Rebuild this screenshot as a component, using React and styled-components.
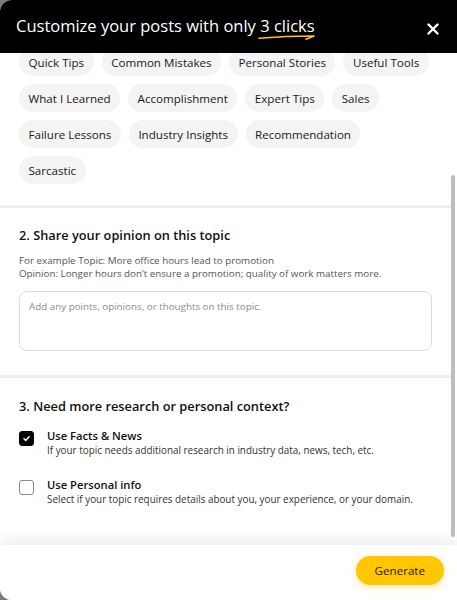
import React, { useLayoutEffect, useRef, useState } from "react";
import styled, { createGlobalStyle } from "styled-components";

const Global = createGlobalStyle`
  html, body { margin: 0; padding: 0; height: 100%; background: #7b7b7b; }
  #root { height: 100%; }
  * { box-sizing: border-box; }
`;

const FONT = `"Open Sans", "Noto Sans", sans-serif`;

const Modal = styled.div`
  width: 457px;
  height: 600px;
  background: #fff;
  border-radius: 12px 0 0 12px;
  overflow: hidden;
  display: flex;
  flex-direction: column;
  font-family: ${FONT};
  color: #111;
`;

const Header = styled.div`
  flex: 0 0 53px;
  background: #000;
  display: flex;
  align-items: center;
  justify-content: space-between;
  padding: 0 16px;
  position: relative;
  z-index: 2;
`;

const Title = styled.h1`
  margin: -2px 0 0;
  font-size: 16.5px;
  font-weight: 400;
  color: #fff;
  line-height: 22px;
  white-space: nowrap;
`;

const Highlight = styled.span`
  position: relative;
  display: inline-block;
`;

const Swoosh = styled.svg`
  position: absolute;
  left: -2px;
  top: 18px;
  width: 60px;
  height: 8px;
  overflow: visible;
`;

const CloseButton = styled.button`
  background: none;
  border: none;
  padding: 0;
  width: 16px;
  height: 16px;
  display: flex;
  align-items: center;
  justify-content: center;
  cursor: pointer;
  margin-top: 5px;
`;

const ScrollWrap = styled.div`
  flex: 1 1 auto;
  min-height: 0;
  position: relative;
`;

const Scroll = styled.div`
  height: 100%;
  overflow-y: scroll;
  padding-right: 6px;
  scrollbar-width: none;
  &::-webkit-scrollbar { display: none; }
`;

const Thumb = styled.div`
  position: absolute;
  right: 2px;
  width: 4px;
  border-radius: 2px;
  background: #bdbdbd;
`;

const Section = styled.section`
  padding: ${(p) => p.$pad || "17px 19px 24px"};
  border-bottom: ${(p) => (p.$divider ? "3px solid #eeeeee" : "none")};
`;

const SectionTitle = styled.h2`
  margin: 0;
  font-size: 12.8px;
  font-weight: 600;
  line-height: 20px;
  color: #111;
`;

const Help = styled.p`
  margin: 9px 0 0;
  font-size: 9.8px;
  line-height: 13px;
  color: #555;
`;

const Chips = styled.div`
  display: flex;
  flex-wrap: wrap;
  gap: 8px;
`;

const Chip = styled.button`
  height: 28px;
  padding: 0 9.5px;
  border: none;
  border-radius: 14px;
  background: ${(p) => (p.$active ? "#ffc700" : "#f4f4f4")};
  font-family: ${FONT};
  font-size: 11.6px;
  font-weight: 500;
  color: #1a1a1a;
  cursor: pointer;
`;

const Input = styled.input`
  display: block;
  width: 100%;
  height: 40px;
  margin-top: 12px;
  border: 1px solid #dcdcdc;
  border-radius: 8px;
  padding: 0 9px;
  font-family: ${FONT};
  font-size: 9.8px;
  outline: none;
  &::placeholder { color: #8a8a8a; }
`;

const SubTitle = styled.h3`
  margin: 14px 0 12px;
  font-size: 11.2px;
  font-weight: 600;
  line-height: 20px;
`;

const TextArea = styled.textarea`
  display: block;
  width: 100%;
  height: 60px;
  margin-top: 11px;
  border: 1px solid #dcdcdc;
  border-radius: 8px;
  padding: 8px 9px;
  font-family: ${FONT};
  font-size: 9.8px;
  resize: none;
  outline: none;
  &::placeholder { color: #8a8a8a; }
`;

const Options = styled.div`
  display: flex;
  flex-direction: column;
  gap: 20px;
  margin-top: 13px;
`;

const Option = styled.label`
  display: flex;
  align-items: flex-start;
  gap: 13px;
  cursor: pointer;
`;

const Box = styled.span`
  flex: 0 0 15px;
  width: 15px;
  height: 15px;
  margin-top: 2px;
  border-radius: 3px;
  background: ${(p) => (p.$checked ? "#000" : "#fff")};
  border: 1px solid ${(p) => (p.$checked ? "#000" : "#8a8a8a")};
  display: flex;
  align-items: center;
  justify-content: center;
`;

const OptionText = styled.div`
  display: flex;
  flex-direction: column;
`;

const OptionLabel = styled.span`
  font-size: 11.2px;
  font-weight: 600;
  line-height: 14px;
  color: #111;
`;

const OptionDesc = styled.span`
  font-size: 9.9px;
  line-height: 15px;
  color: #333;
`;

const Footer = styled.div`
  flex: 0 0 55px;
  background: #fff;
  display: flex;
  align-items: center;
  justify-content: flex-end;
  padding: 0 13px 4px;
  box-shadow: 0 -6px 14px rgba(0, 0, 0, 0.07);
  position: relative;
  z-index: 1;
`;

const Generate = styled.button`
  height: 29px;
  padding: 0 19px;
  border: none;
  border-radius: 15px;
  background: #ffc700;
  box-shadow: 0 2px 10px rgba(255, 199, 0, 0.35);
  font-family: ${FONT};
  font-size: 11.6px;
  font-weight: 500;
  color: #1a1a1a;
  cursor: pointer;
`;

const chips = [
  "Quick Tips", "Common Mistakes", "Personal Stories", "Useful Tools",
  "What I Learned", "Accomplishment", "Expert Tips", "Sales",
  "Failure Lessons", "Industry Insights", "Recommendation", "Sarcastic",
];

const Check = () => (
  <svg width="9" height="9" viewBox="0 0 10 10">
    <path d="M2.2 5.3 L4.1 7.1 L7.9 3" fill="none" stroke="#fff" strokeWidth="1.6" strokeLinecap="round" strokeLinejoin="round" />
  </svg>
);

export default function App() {
  const ref = useRef(null);
  const [facts, setFacts] = useState(true);
  const [personal, setPersonal] = useState(false);
  const [thumb, setThumb] = useState({ top: 0, height: 0 });

  const update = () => {
    const el = ref.current;
    if (!el) return;
    const inset = 2;
    const track = el.clientHeight - inset * 2 - 6;
    const h = (el.clientHeight / el.scrollHeight) * track;
    const maxScroll = el.scrollHeight - el.clientHeight;
    const t = maxScroll > 0 ? (el.scrollTop / maxScroll) * (track - h) : 0;
    setThumb({ top: inset + t, height: h });
  };

  useLayoutEffect(() => {
    if (ref.current) ref.current.scrollTop = ref.current.scrollHeight;
    update();
  }, []);

  return (
    <>
      <Global />
      <Modal>
        <Header>
          <Title>
            Customize your posts with only{" "}
            <Highlight>
              3 clicks
              <Swoosh viewBox="0 0 60 8">
                <path d="M1 5.2 Q 28 3 56 3 L 48 6.2" fill="none" stroke="#ffc700" strokeWidth="1.6" strokeLinecap="round" strokeLinejoin="round" />
              </Swoosh>
            </Highlight>
          </Title>
          <CloseButton aria-label="Close">
            <svg width="12" height="12" viewBox="0 0 12 12">
              <path d="M1.5 1.5 L10.5 10.5 M10.5 1.5 L1.5 10.5" stroke="#fff" strokeWidth="2.4" strokeLinecap="round" />
            </svg>
          </CloseButton>
        </Header>
        <ScrollWrap>
          <Scroll ref={ref} onScroll={update}>
            <Section $divider $pad="18px 19px 21px">
              <SectionTitle>1. What do you want to post about?</SectionTitle>
              <Help>Enter a topic or idea for your post.</Help>
              <Input placeholder="e.g. More office hours lead to promotion" />
              <SubTitle>Pick a post type</SubTitle>
              <Chips>
                {chips.map((c) => <Chip key={c}>{c}</Chip>)}
              </Chips>
            </Section>
            <Section $divider>
              <SectionTitle>2. Share your opinion on this topic</SectionTitle>
              <Help>
                For example Topic: More office hours lead to promotion
                <br />
                Opinion: Longer hours don’t ensure a promotion; quality of work matters more.
              </Help>
              <TextArea placeholder="Add any points, opinions, or thoughts on this topic." />
            </Section>
            <Section $pad="18px 19px 38px">
              <SectionTitle>3. Need more research or personal context?</SectionTitle>
              <Options>
                <Option onClick={() => setFacts(!facts)}>
                  <Box $checked={facts}>{facts && <Check />}</Box>
                  <OptionText>
                    <OptionLabel>Use Facts &amp; News</OptionLabel>
                    <OptionDesc>If your topic needs additional research in industry data, news, tech, etc.</OptionDesc>
                  </OptionText>
                </Option>
                <Option onClick={() => setPersonal(!personal)}>
                  <Box $checked={personal}>{personal && <Check />}</Box>
                  <OptionText>
                    <OptionLabel>Use Personal info</OptionLabel>
                    <OptionDesc>Select if your topic requires details about you, your experience, or your domain.</OptionDesc>
                  </OptionText>
                </Option>
              </Options>
            </Section>
          </Scroll>
          <Thumb style={{ top: thumb.top, height: thumb.height }} />
        </ScrollWrap>
        <Footer>
          <Generate>Generate</Generate>
        </Footer>
      </Modal>
    </>
  );
}
